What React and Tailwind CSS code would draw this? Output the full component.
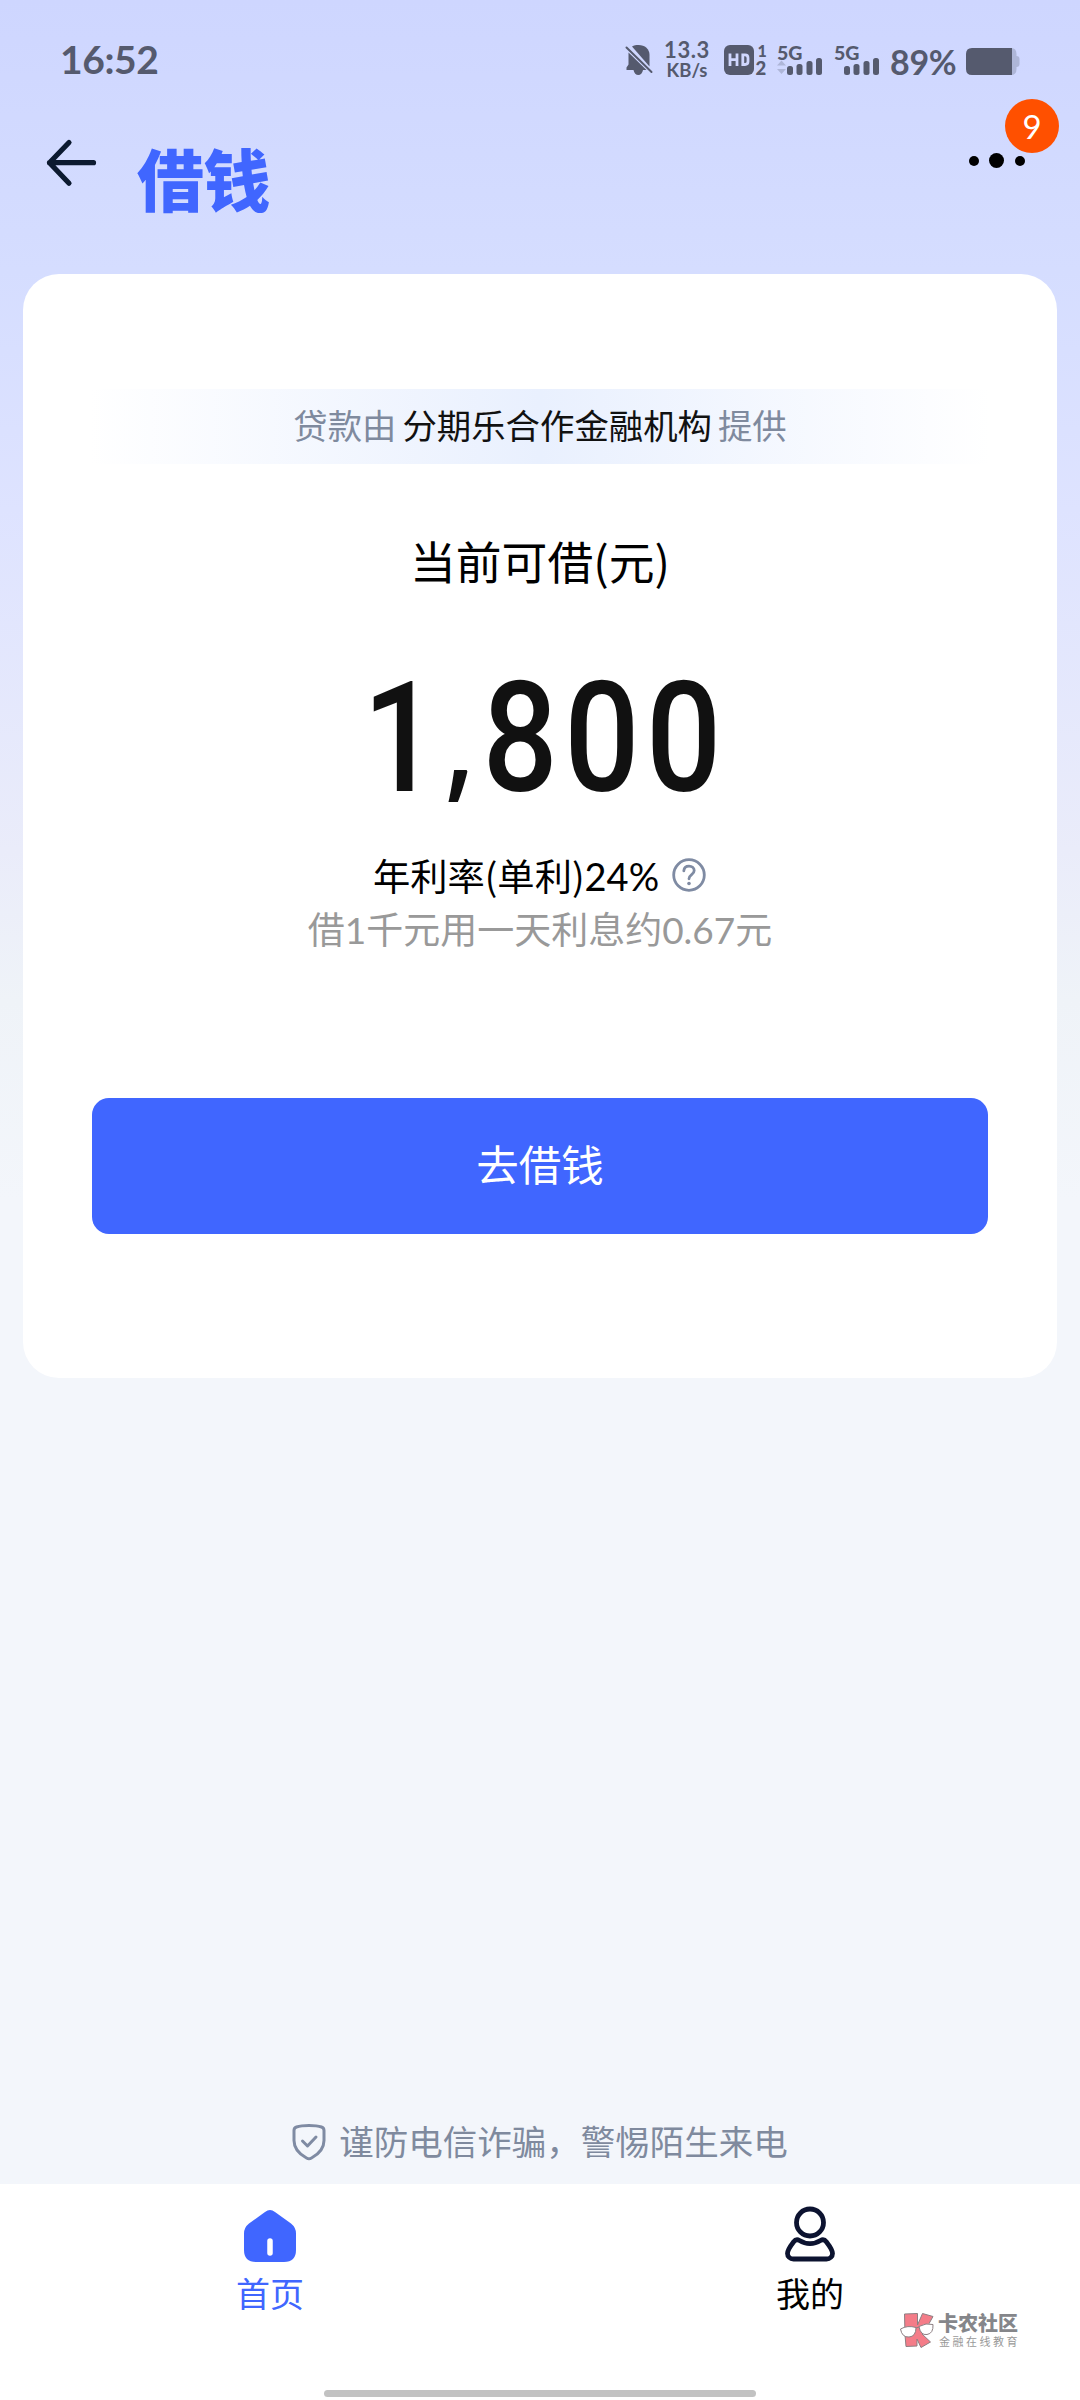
// Signal strength with the 5G label, optional data arrows
const Signal = ({ arrows }) => (
  <svg className="overflow-visible" width="46" height="32" viewBox="0 0 46 32" fill="#555a6e">
    <text x="0" y="15.500" fontSize="19.500" fontWeight="900" fontFamily="Lato, sans-serif">
      5G
    </text>
    {arrows && (
      <g fill="#aeb6d8">
        <path d="M4.500 16.500l4.500 5h-9z" />
        <path d="M4.500 30l4.500-5h-9z" />
      </g>
    )}
    <rect x="10" y="22" width="6" height="9" rx="2.500" />
    <rect x="19.500" y="20" width="6" height="11" rx="2.500" />
    <rect x="29.500" y="17" width="6" height="14" rx="2.500" />
    <rect x="39" y="14" width="6" height="17" rx="2.500" />
  </svg>
);

const StatusBar = () => (
  <div className="flex h-[104px] items-start pt-[44px] pl-[60px] text-[#555a6e]">
    <span className="-mt-[3px] w-[120px] text-[39px] leading-[36px] font-bold tracking-[-0.4px]">16:52</span>

    {/* Muted bell */}
    <svg className="ml-[445px]" width="28" height="32" viewBox="0 0 28 32" fill="#555a6e">
      <path d="M7 2.500C9 1.300 11 1 13.500 1C20 1 24.500 5 24.500 11v11.500z" />
      <path d="M3.500 8.500L21.500 26H18c-.5 3-2.500 5-4.700 5S9 29 8.500 26H1.500v-2.500l2-3z" />
      <path d="M1.500 3.500l25 24.500" stroke="#555a6e" strokeWidth="2" strokeLinecap="round" />
    </svg>

    {/* Network speed */}
    <div className="-mt-[5px] ml-[10px] flex w-[48px] flex-col items-center font-bold">
      <span className="text-[22px] leading-[22px] tracking-[0.6px]">13.3</span>
      <span className="text-[18.500px] leading-[19px]">KB/s</span>
    </div>

    {/* HD voice, SIM 1 and 2 */}
    <svg className="ml-[13px] overflow-visible" width="46" height="32" viewBox="0 0 46 32" fill="#555a6e">
      <rect x="0" y="1" width="30" height="30" rx="6" />
      <path d="M6 9.500v12.500M13 9.500v12.500M6 15.700h7M18.800 10.900h2.200q3 0 3 3v3.600q0 3-3 3h-2.200z" fill="none" stroke="#d0d7fe" strokeWidth="2.800" />
      <text x="33.500" y="12.500" fontSize="16" fontWeight="900" fontFamily="Lato, sans-serif">1</text>
      <text x="31.500" y="30.500" fontSize="18.500" fontWeight="900" fontFamily="Lato, sans-serif">2</text>
    </svg>
    <div className="ml-[7px]">
      <Signal arrows />
    </div>
    <div className="ml-[11px]">
      <Signal />
    </div>
    <span className="ml-[10px] w-[69px] text-[34px] leading-[36px] font-bold tracking-[-0.3px] whitespace-nowrap">89%</span>

    {/* Battery */}
    <svg className="ml-[7px]" width="54" height="32" viewBox="0 0 54 32">
      <path d="M42 4h3q5.500 0 5.500 6v2q3 0 3 3v5q0 3-3 3v2q0 6-5.500 6h-3z" fill="#aeb6d8" />
      <path d="M6 4h40v27H6q-6 0-6-6V10q0-6 6-6z" fill="#555a6e" />
    </svg>
  </div>
);

const Header = () => (
  <header className="flex h-[170px] items-start">
    <svg className="mt-[34px] ml-[45px]" width="52" height="50" viewBox="0 0 52 50" fill="none" stroke="#0c1a30" strokeWidth="5.200" strokeLinecap="round" strokeLinejoin="round">
      <path d="M24 4.500L4.500 24.700L24 45.200M4.500 24.700h44" />
    </svg>
    <h1 className="mt-[40px] ml-[40px] text-[67px] leading-[72px] font-black tracking-[-0.5px] text-[#4066ff]">借钱</h1>
    <div className="relative mt-[49px] ml-auto flex w-[112px] items-center gap-[16px] pl-[0.5px]">
      <span className="size-[10px] rounded-full bg-black" />
      <span className="-mx-[5.5px] size-[15px] rounded-full bg-black" />
      <span className="size-[10px] rounded-full bg-black" />
      <span className="absolute -top-[54px] left-[37px] flex size-[54px] items-center justify-center rounded-full bg-[#ff5000] text-[33px] leading-none text-white">
        9
      </span>
    </div>
  </header>
);

const LoanCard = () => (
  <section className="mx-[23px] flex h-[1104px] flex-col items-center rounded-[36px] bg-white pt-[115px] font-['Noto_Sans_CJK_SC',sans-serif]">
    <div className="flex h-[75px] w-[900px] items-center justify-center bg-linear-to-r from-white via-[#e9f0fe] to-white pb-[3px] text-[34.400px] text-[#7f8a9e]">
      <span>贷款由</span>
      <span className="mx-[6px] text-[#111]">分期乐合作金融机构</span>
      <span>提供</span>
    </div>

    <h2 className="mt-[66px] text-[45.800px] leading-[60px] text-black">当前可借(元)</h2>

    {/* Available amount */}
    <div className="mt-[61px] ml-[11px] flex scale-x-[0.86] font-[Roboto,sans-serif] text-[154px] leading-[176px] font-medium tracking-[7.500px] text-[#111]">
      <span>1</span>
      <span className="-mt-[4px] font-['Open_Sans',sans-serif] text-[130px] font-semibold tracking-[9px]">,</span>
      <span>800</span>
    </div>

    <div className="mt-[20px] flex h-[56px] items-center text-[37.300px] leading-[56px] text-black">
      <span>
        年利率(单利)<span className="font-[Lato,sans-serif] text-[38px]">24%</span>
      </span>
      <svg className="ml-[12px]" width="36" height="36" viewBox="0 0 36 36" fill="none" stroke="#7f8ba3" strokeWidth="2.800" strokeLinecap="round">
        <circle cx="18" cy="18" r="15.300" />
        <path d="M12.800 13.800c.3-3 2.300-4.600 5.200-4.600s5.200 1.700 5.200 4.400c0 4.200-5.200 3.800-5.200 8.200" />
        <circle cx="18" cy="26.500" r="1.800" fill="#7f8ba3" stroke="none" />
      </svg>
    </div>
    <p className="font-[Lato,'Noto_Sans_CJK_SC',sans-serif] text-[37px] leading-[54px] text-[#999]">借1千元用一天利息约0.67元</p>

    <button className="mt-auto mb-[144px] h-[136px] w-[896px] shrink-0 rounded-[17px] bg-[#4066ff] pb-[7px] text-[42.500px] text-white">去借钱</button>
  </section>
);

const TabBar = () => (
  <nav className="flex h-[216px] flex-col bg-white">
    <div className="flex h-[206px] text-[34px] leading-[48px]">
      <div className="flex flex-1 flex-col items-center pt-[22px] text-[#4066ff]">
        <svg width="60" height="60" viewBox="0 0 60 60">
          <path d="M25 6q5-4 10 0l16 11.500q5 4 5 10V44q0 12-12 12H16Q4 56 4 44V27.500q0-6 5-10z" fill="#4066ff" />
          <path d="M30 35v12" stroke="#fff" strokeWidth="5.500" strokeLinecap="round" />
        </svg>
        <span className="mt-[4px]">首页</span>
      </div>
      <div className="flex flex-1 flex-col items-center pt-[22px] text-black">
        <svg width="60" height="60" viewBox="0 0 60 60" fill="none" stroke="#0c1330" strokeWidth="4.800" strokeLinejoin="round">
          <circle cx="30" cy="16.500" r="13.500" />
          <path d="M19.500 34.500C26 38.500 34 38.500 40.500 34.500C43 33 45 34 46.500 36C50 40.500 52.500 43.500 52.500 47.500C52.500 50.500 50 53 46.500 53H13.500C10 53 7.500 50.500 7.500 47.500C7.500 43.500 10 40.500 13.500 36C15 34 17 33 19.500 34.500z" />
        </svg>
        <span className="mt-[4px]">我的</span>
      </div>
    </div>
    <div className="mx-auto h-[7px] w-[432px] rounded-full bg-[#c2c2c2]" />
  </nav>
);

// Community mark laid over the bottom right corner
const Watermark = () => (
  <div className="absolute top-[2311px] left-[899px] flex items-start">
    <svg width="36" height="38" viewBox="0 0 36 38" stroke="#8d7f83" strokeWidth="1" strokeLinejoin="round">
      <path d="M5.500 3l13-.5V14l5-11.500 10.500 3L27 18l-4 5 8.500 8-9.500 5.500-4-8.500v7L7 35.500 6 24z" fill="#f47c88" />
      <path d="M1.500 18q7-4 15.500-1.500 0 9-7 9.500T1.500 18zM20 15.500q7-4 14-2 .5 9-6 10t-8-8z" fill="#fff" />
      <path d="M17 17l3-1" />
    </svg>
    <div className="ml-[3px] flex flex-col">
      <span className="mt-px text-[20px] leading-[22px] font-black text-[#85868a]">卡农社区</span>
      <span className="pl-px text-[11px] leading-[15px] tracking-[2.500px] text-[#999]">金融在线教育</span>
    </div>
  </div>
);

const App = () => {
  return (
    <div className="relative flex h-[2400px] w-[1080px] flex-col overflow-hidden bg-[#f3f6fb] bg-[linear-gradient(180deg,#ced6ff_0px,#d5ddff_270px,#dee3ff_510px,#eaecfa_850px,#eff3f8_1000px,#f3f6fb_1200px)] font-[Lato,'Noto_Sans_CJK_SC',sans-serif]">
      <StatusBar />
      <Header />
      <LoanCard />

      {/* Fraud notice */}
      <div className="mt-auto flex h-[84px] items-center justify-center pb-px text-[34.500px] text-[#7f8a9e]">
        <svg className="mr-[13px]" width="34" height="38" viewBox="0 0 34 38" fill="none" stroke="#7f8ba3" strokeWidth="3" strokeLinecap="round" strokeLinejoin="round">
          <path d="M17 2.500c5 0 9.500.5 12.500 1.500 1.500.5 2.500 1.500 2.500 3.500v10c0 9-6 14-12.500 17.500q-2.500 1.500-5 0C8 31.500 2 26.500 2 17.500v-10C2 5.500 3 4.500 4.500 4 7.500 3 12 2.500 17 2.500z" />
          <path d="M10.500 18l5 5 8.500-9" />
        </svg>
        <span>谨防电信诈骗，警惕陌生来电</span>
      </div>

      <TabBar />
      <Watermark />
    </div>
  );
};

export default App;
